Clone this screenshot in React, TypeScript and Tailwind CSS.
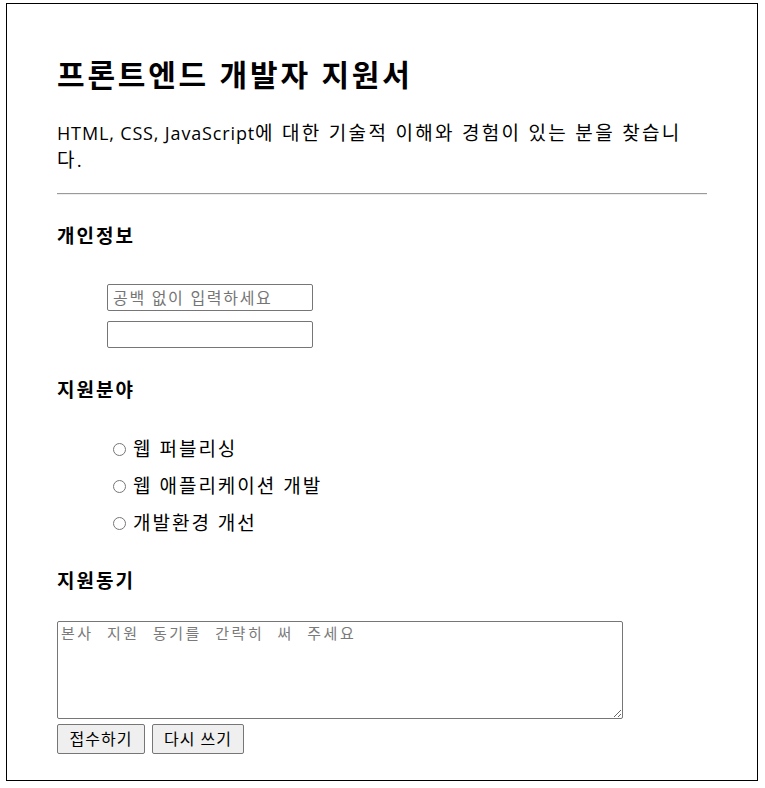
import { useState } from "react";

const fields = ["웹 퍼블리싱", "웹 애플리케이션 개발", "개발환경 개선"];

export default function App() {
  const [field, setField] = useState("");

  return (
    <div className="bg-white font-['Open_Sans','Noto_Sans_CJK_KR',sans-serif] text-black">
      <form className="ml-[6px] mt-[3px] w-[752px] border border-black px-[50px] pb-[26px] pt-[53px]">
        <h1 className="text-[30px] font-bold leading-[36px] tracking-[2.8px]">프론트엔드 개발자 지원서</h1>
        <p className="mt-[27px] pr-[10px] text-[19px] leading-[27px] tracking-[2.3px]">
          <span className="text-[18px] tracking-[0.85px]">HTML, CSS, JavaScript</span>에 대한 기술적 이해와 경험이 있는 분을 찾습니
          <br />
          다.
        </p>
        <hr className="mt-[19px] border-t border-b border-t-[#9a9a9a] border-b-[#eeeeee]" />

        <h2 className="mt-[28px] text-[19px] font-bold leading-[27px] tracking-[2px]">개인정보</h2>
        <div className="ml-[50px] mt-[34px] flex flex-col gap-[10px]">
          <input
            type="text"
            placeholder="공백 없이 입력하세요"
            className="h-[27px] w-[206px] rounded-[2px] border border-[#767676] px-[5px] text-[16px] tracking-[1.7px] outline-none placeholder:text-[#757575]"
          />
          <input
            type="email"
            className="h-[27px] w-[206px] rounded-[2px] border border-[#767676] px-[5px] text-[16px] outline-none"
          />
        </div>

        <h2 className="mt-[29px] text-[19px] font-bold leading-[27px] tracking-[2px]">지원분야</h2>
        <ul className="ml-[50px] mt-[27px]">
          {fields.map((f) => (
            <li key={f} className="flex h-[37px] items-center">
              <label className="flex items-center text-[19px] leading-[27px] tracking-[2px]">
                <input
                  type="radio"
                  name="field"
                  checked={field === f}
                  onChange={() => setField(f)}
                  className="ml-[6px] mr-[7px] h-[13px] w-[13px]"
                />
                {f}
              </label>
            </li>
          ))}
        </ul>

        <h2 className="mt-[26px] text-[19px] font-bold leading-[27px] tracking-[2px]">지원동기</h2>
        <textarea
          placeholder="본사 지원 동기를 간략히 써 주세요"
          className="mt-[26px] block h-[98px] w-[566px] rounded-[2px] border border-[#767676] px-[3px] py-[1px] text-[15px] leading-[20px] tracking-[2.5px] [word-spacing:7px] outline-none placeholder:text-[#7a7a7a]"
        />
        <div className="mt-[5px] flex gap-[7px]">
          <button
            type="submit"
            className="h-[30px] w-[88px] rounded-[2px] border border-[#767676] bg-[#efefef] text-[16px] tracking-[1px]"
          >
            접수하기
          </button>
          <button
            type="reset"
            className="h-[30px] w-[92px] rounded-[2px] border border-[#767676] bg-[#efefef] text-[16px] tracking-[1px]"
          >
            다시 쓰기
          </button>
        </div>
      </form>
    </div>
  );
}
